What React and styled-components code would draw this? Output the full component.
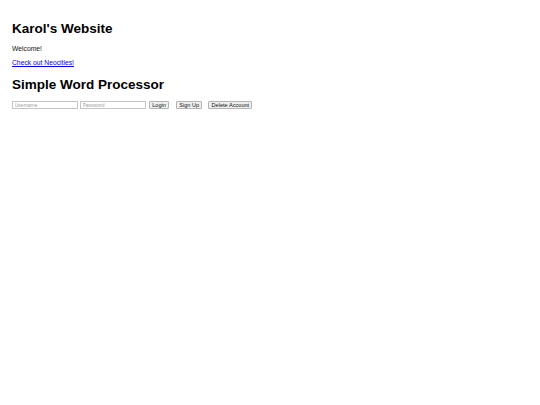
import React from "react";
import styled, { createGlobalStyle } from "styled-components";

const GlobalStyle = createGlobalStyle`
  html, body {
    margin: 0;
    padding: 0;
    background: #ffffff;
  }
  body {
    font-family: "Liberation Sans", Arial, Helvetica, sans-serif;
    color: #000000;
  }
`;

const Page = styled.main`
  padding: 20.9px 12px 0 12px;
  display: flex;
  flex-direction: column;
  align-items: flex-start;
`;

const Heading = styled.h1`
  margin: ${(p) => p.$top || 0}px 0 0 0;
  font-size: 13.5px;
  line-height: 15.5px;
  font-weight: bold;
  color: #000;
`;

const Para = styled.p`
  margin: ${(p) => p.$top || 0}px 0 0 0;
  font-size: 6.75px;
  line-height: 7.75px;
  color: #111;
`;

const Link = styled.a`
  color: #0000ee;
  text-decoration: underline;
`;

const Form = styled.form`
  margin-top: 8.6px;
  display: flex;
  align-items: center;
`;

const Field = styled.input`
  box-sizing: border-box;
  width: 66px;
  height: 8px;
  margin: 0 ${(p) => p.$gap || 0}px 0 0;
  padding: 0 1.5px;
  border: 1px solid #c4c4c4;
  border-radius: 0.5px;
  font-family: "Liberation Sans", Arial, sans-serif;
  font-size: 5px;
  line-height: 6px;
  background: #fff;
  outline: none;
  &::placeholder {
    color: #a0a0a0;
  }
`;

const Button = styled.button`
  box-sizing: border-box;
  height: 8px;
  margin: 0 ${(p) => p.$gap || 0}px 0 0;
  padding: 0 2.2px;
  border: 1px solid #b3b3b3;
  border-radius: 1px;
  background: #efefef;
  font-family: "Liberation Sans", Arial, sans-serif;
  font-size: 5.6px;
  line-height: 6px;
  color: #111;
  display: inline-flex;
  align-items: center;
  justify-content: center;
  cursor: pointer;
`;

export default function App() {
  return (
    <>
      <GlobalStyle />
      <Page>
        <Heading>Karol's Website</Heading>
        <Para $top={8.7}>Welcome!</Para>
        <Para $top={6.65}>
          <Link href="https://neocities.org">Check out Neocities!</Link>
        </Para>
        <Heading $top={9.65}>Simple Word Processor</Heading>
        <Form onSubmit={(e) => e.preventDefault()}>
          <Field type="text" placeholder="Username" $gap={2} />
          <Field type="password" placeholder="Password" $gap={3} />
          <Button type="button" $gap={7}>Login</Button>
          <Button type="button" $gap={6}>Sign Up</Button>
          <Button type="button">Delete Account</Button>
        </Form>
      </Page>
    </>
  );
}
